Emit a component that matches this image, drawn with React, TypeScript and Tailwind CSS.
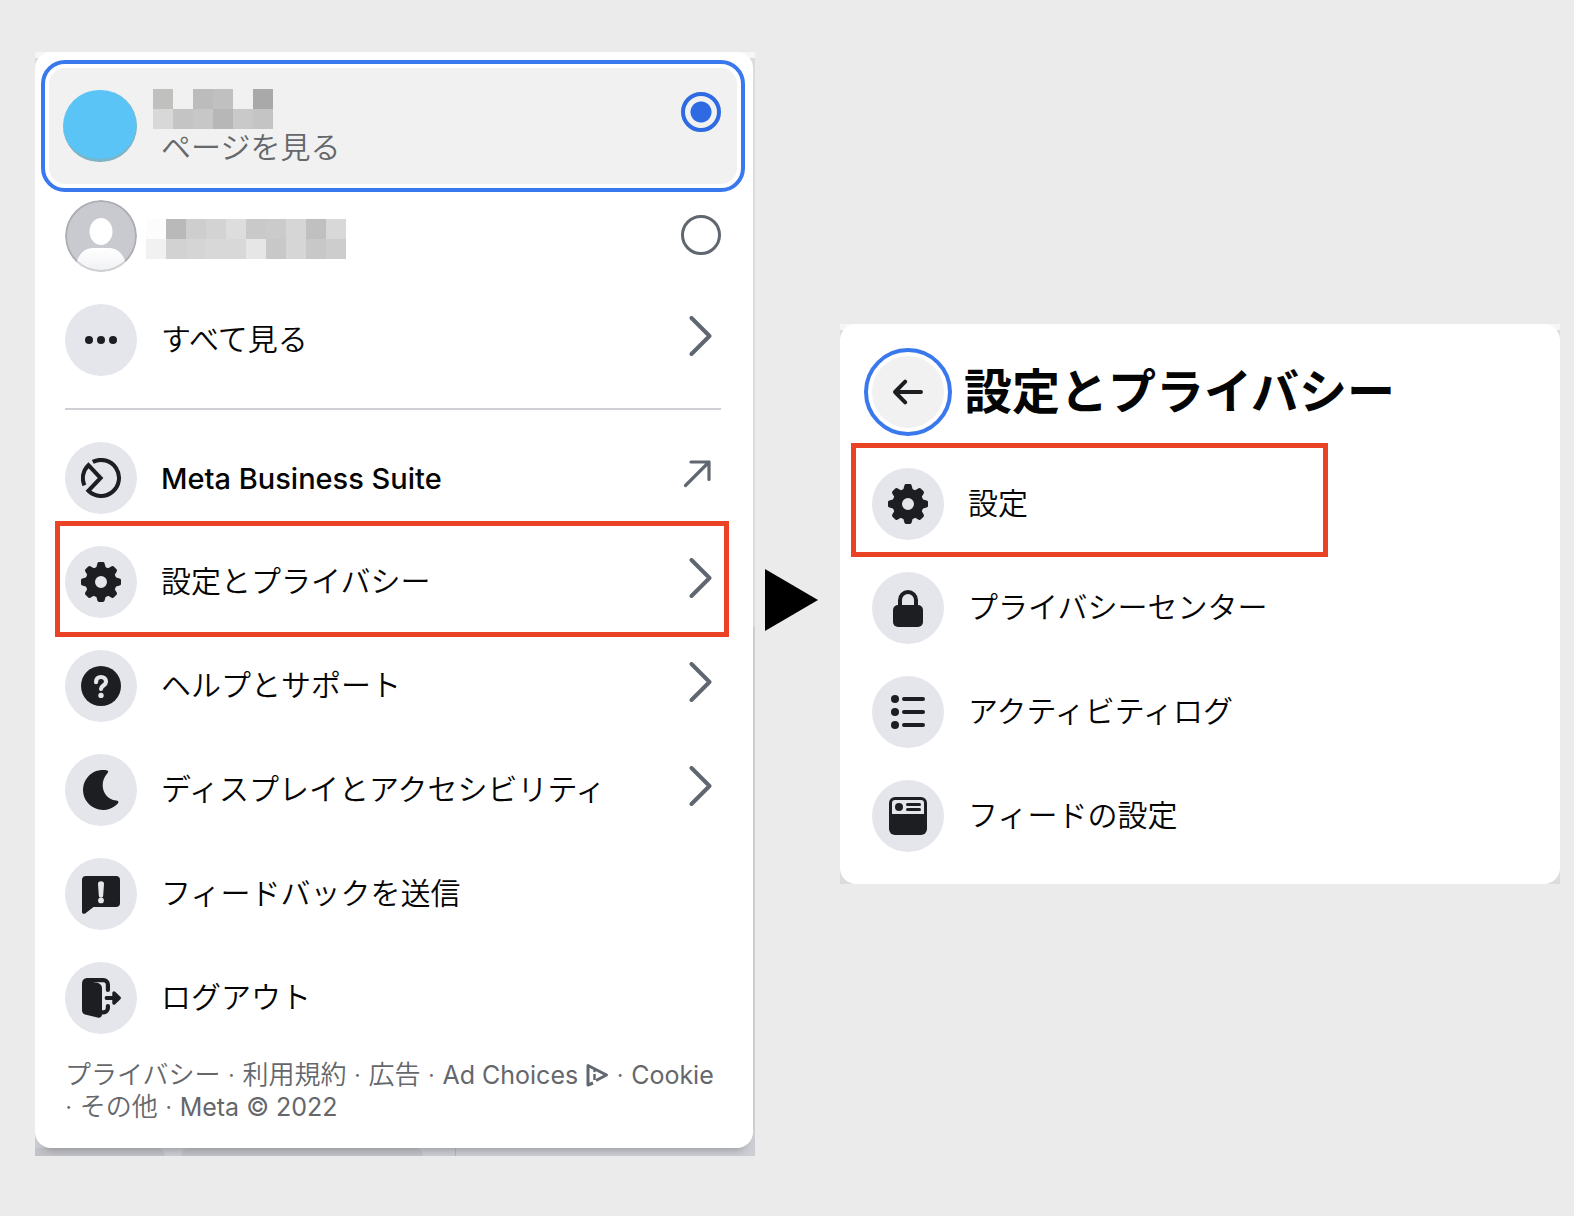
import type { ReactNode } from 'react'

const TOOTH = 'M14.6 8L16.4 1.4Q16.8 0 18 0H22Q23.2 0 23.6 1.4L25.4 8Z'

const ICONS: Record<string, ReactNode> = {
  dots: (
    <g fill="currentColor">
      <circle cx="8" cy="20" r="4" />
      <circle cx="20" cy="20" r="4" />
      <circle cx="32" cy="20" r="4" />
    </g>
  ),
  business: (
    <path
      d="M11.8 3.9A18 18 0 1 1 7.4 32.8L19.6 20 7.4 7.2A18 18 0 0 0 3.4 27.4"
      fill="none" stroke="currentColor" strokeWidth="4"
    />
  ),
  gear: (
    <g fill="currentColor">
      <circle cx="20" cy="20" r="10.8" fill="none" stroke="currentColor" strokeWidth="9.6" />
      {[0, 45, 90, 135, 180, 225, 270, 315].map(a => (
        <path key={a} d={TOOTH} transform={`rotate(${a} 20 20)`} />
      ))}
    </g>
  ),
  help: (
    <g>
      <circle cx="20" cy="20" r="20" fill="currentColor" />
      <path d="M15 16.2C15 12.8 17 11 20 11s5 1.8 5 4.8C25 19.4 20 19.6 20 23" fill="none" stroke="#e4e6eb" strokeWidth="4.2" strokeLinecap="round" />
      <circle cx="20" cy="29.4" r="2.7" fill="#e4e6eb" />
    </g>
  ),
  moon: (
    <path d="M25.4.2C27.4.5 27.7 1.8 26.4 3.2 17.6 12.8 21.4 29 35.2 30.6 37.4 30.8 38 32 36.8 33.4A20 20 0 1 1 25.4.2Z" fill="currentColor" />
  ),
  feedback: (
    <g>
      <path d="M5 2H35a4 4 0 0 1 4 4V29a4 4 0 0 1-4 4H12.5L4.5 39.2C3 40.5 1 39.8 1 38V6a4 4 0 0 1 4-4Z" fill="currentColor" />
      <path d="M17 10C16.9 8 18 7.2 20 7.2S23.1 8 23 10L22.2 21.5C22.1 23 21.4 23.6 20 23.6S17.9 23 17.8 21.5Z" fill="#e4e6eb" />
      <circle cx="20" cy="26.4" r="2.9" fill="#e4e6eb" />
    </g>
  ),
  logout: (
    <g fill="none" stroke="currentColor" strokeLinecap="round">
      <path d="M7 2.1H22.5a4.4 4.4 0 0 1 4.4 4.4V12M21 34.4H22.5a4.4 4.4 0 0 0 4.4-4.4V28" strokeWidth="4.2" />
      <path d="M1 6C1 2 3 0 7 0H13V4.3C18 4.8 21 6.5 21 10V36.5C21 39 19 40.2 16.5 39.5L5 36.8C2.5 36 1 35 1 32.5Z" fill="currentColor" stroke="none" />
      <path d="M25.5 20H36" strokeWidth="3.8" />
      <path d="M33 15L38.2 20 33 25Z" fill="currentColor" strokeWidth="3.4" strokeLinejoin="round" />
    </g>
  ),
  lock: (
    <g>
      <rect x="5" y="17" width="30" height="22" rx="5" fill="currentColor" />
      <path d="M12 19V12a8 8 0 0 1 16 0V19" fill="none" stroke="currentColor" strokeWidth="4" />
    </g>
  ),
  list: (
    <g fill="currentColor">
      {[7, 20, 33].map(y => (
        <g key={y}>
          <circle cx="7" cy={y} r="4" />
          <rect x="14" y={y - 2} width="23" height="4" rx="2" />
        </g>
      ))}
    </g>
  ),
  feed: (
    <g>
      <rect x="1" y="1" width="38" height="38" rx="6" fill="currentColor" />
      <path d="M7 4H33a3 3 0 0 1 3 3V18H4V7a3 3 0 0 1 3-3Z" fill="#e4e6eb" />
      <g fill="currentColor">
        <circle cx="11" cy="11" r="4" />
        <rect x="18" y="7" width="15" height="3" rx="1.5" />
        <rect x="18" y="12" width="15" height="3" rx="1.5" />
      </g>
    </g>
  ),
}

const MENU = [
  { icon: 'business', label: 'Meta Business Suite', end: 'external' },
  { icon: 'gear', label: '設定とプライバシー', end: 'chevron', marked: true },
  { icon: 'help', label: 'ヘルプとサポート', end: 'chevron' },
  { icon: 'moon', label: 'ディスプレイとアクセシビリティ', end: 'chevron' },
  { icon: 'feedback', label: 'フィードバックを送信' },
  { icon: 'logout', label: 'ログアウト' },
]

const SETTINGS = [
  { icon: 'lock', label: 'プライバシーセンター' },
  { icon: 'list', label: 'アクティビティログ' },
  { icon: 'feed', label: 'フィードの設定' },
]

// Pixelated account names
const NAME_ONE = [
  '#c0c0be', '#f1f1f1', '#bcbcbc', '#c0c0c0', '#f1f1f1', '#a9a9a9',
  '#d8d8d8', '#c4c4c4', '#c7c7c7', '#b7b7b7', '#c9c9c9', '#c4c4c4',
]
const NAME_TWO = [
  '#fcfcfc', '#b9b9b9', '#cecece', '#d3d3d3', '#dddddd', '#c9c9c9', '#cbcbcb', '#d6d6d6', '#c0c0c0', '#d8d8d8',
  '#f1f1f1', '#d2d2d2', '#d5d5d5', '#d8d8d8', '#d8d8d8', '#e6e6e6', '#c8c8c8', '#d6d6d6', '#c8c8c8', '#cdcdcd',
]

function Mosaic({ cells, className }: { cells: string[]; className: string }) {
  return (
    <span className={`grid auto-rows-[20px] ${className}`}>
      {cells.map((color, i) => (
        <span key={i} style={{ backgroundColor: color }} />
      ))}
    </span>
  )
}

function IconCircle({ name }: { name: string }) {
  return (
    <span className="flex size-[72px] shrink-0 items-center justify-center rounded-full bg-[#e4e6eb] text-[#1c1e21]">
      <svg viewBox="0 0 40 40" className="size-10">{ICONS[name]}</svg>
    </span>
  )
}

function EndIcon({ type }: { type: string }) {
  return (
    <svg
      viewBox="0 0 40 40" className="mb-2 ml-auto size-10 shrink-0 text-[#606770]"
      fill="none" stroke="currentColor" strokeLinecap="round" strokeLinejoin="round"
    >
      {type === 'chevron'
        ? <path d="M10.5 2L28.5 20 10.5 38" strokeWidth="4" />
        : <path d="M4.5 31.5L28 8M10 8H28V25.5" strokeWidth="3.2" />}
    </svg>
  )
}

type RowProps = { icon: string; label: string; end?: string; marked?: boolean }

function MenuRow({ icon, label, end, marked }: RowProps) {
  return (
    <li className="relative">
      <button type="button" className="flex h-[104px] w-full items-center gap-6 px-4 text-left leading-10 text-[#050505]">
        <IconCircle name={icon} />
        <span className={icon === 'business' ? 'pt-0.5 text-[29px] font-medium' : 'pb-0.5 text-[30px] font-[350]'}>{label}</span>
        {end && <EndIcon type={end} />}
      </button>
      {marked && <span className="pointer-events-none absolute -top-[9px] right-2 -bottom-[3px] left-1.5 border-[5px] border-[#eb4226]" />}
    </li>
  )
}

function AccountMenu() {
  return (
    <section className="min-w-0 flex-1 overflow-hidden bg-[#d0d1d5] bg-[linear-gradient(#f6f6f6_0_6px,#dcdcdc_6px_575px,#cdced4_575px)]">
      <div className="mr-0.5 rounded-2xl bg-white pt-4 pr-4 pb-[25px] pl-3.5 shadow-[0_10px_8px_-8px_rgba(0,0,0,0.25)]">
        <label className="flex h-[116px] items-start rounded-2xl bg-[#f1f1f1] pr-4 pl-3.5 outline-4 outline-offset-4 outline-[#3a78ee]">
          <span className="mt-[22px] h-[72px] w-[74px] shrink-0 rounded-full border-r border-b-3 border-[#7db5c6] bg-[#5ac4f7]" />
          <span className="mt-[21px] ml-4 block">
            <Mosaic cells={NAME_ONE} className="grid-cols-[repeat(6,20px)]" />
            <span className="block pl-2 text-[30px] leading-9 font-[350] text-[#65676b]">ページを見る</span>
          </span>
          <input
            type="radio" name="account" defaultChecked
            className="mt-6 ml-auto size-10 shrink-0 appearance-none rounded-full border-4 border-[#2e6be2] bg-[radial-gradient(circle,#2e6be2_10px,transparent_11px)]"
          />
        </label>
        <label className="flex h-[104px] items-center px-4">
          <svg viewBox="0 0 72 72" className="size-[72px] shrink-0">
            <defs>
              <linearGradient id="body" x1="0" y1="0" x2="0" y2="1">
                <stop offset="0" stopColor="#fff" />
                <stop offset="1" stopColor="#eff0f3" />
              </linearGradient>
              <clipPath id="face"><circle cx="36" cy="36" r="36" /></clipPath>
            </defs>
            <g clipPath="url(#face)">
              <circle cx="36" cy="36" r="36" fill="#c9cad0" />
              <ellipse cx="36" cy="31.5" rx="11.5" ry="13.5" fill="#fff" />
              <path d="M11 64C14 53 20 48 29 48H43C52 48 58 53 61 64V72H11Z" fill="url(#body)" />
              <circle cx="36" cy="36" r="35" fill="none" stroke="#000" strokeOpacity="0.14" strokeWidth="2" />
            </g>
          </svg>
          <Mosaic cells={NAME_TWO} className="ml-[9px] mt-1.5 grid-cols-[repeat(10,20px)]" />
          <input
            type="radio" name="account"
            className="mb-0.5 ml-auto size-10 shrink-0 appearance-none rounded-full border-3 border-[#606770]"
          />
        </label>
        <ul>
          <MenuRow icon="dots" label="すべて見る" end="chevron" />
        </ul>
        <hr className="mx-4 my-4 border-t-2 border-[#ced0d4]" />
        <ul>
          {MENU.map(item => <MenuRow key={item.label} {...item} />)}
        </ul>
        <footer className="mt-[9px] px-4 text-[26px] leading-8 font-[350] text-[#65676b]">
          <a href="#">プライバシー</a> · <a href="#">利用規約</a> · <a href="#">広告</a> ·{' '}
          <a href="#" className="text-[25px] font-normal">
            Ad Choices{' '}
            <svg viewBox="0 0 24 24" className="inline size-6 align-[-3px] text-[#606770]" fill="none" stroke="currentColor">
              <path d="M8 20L3 22V2.5L21.5 12 11 17.5" strokeWidth="3" strokeLinejoin="round" />
              <path d="M9.5 11V17" strokeWidth="2.5" />
              <circle cx="9.5" cy="8" r="1.3" fill="currentColor" stroke="none" />
            </svg>
          </a>{' '}
          · <a href="#" className="text-[25px] font-normal">Cookie</a>{' '}
          <span className="whitespace-nowrap">· <a href="#">その他</a></span> · <span className="text-[25px] font-normal">Meta © 2022</span>
        </footer>
      </div>
      {/* Sliver of the page behind the menu */}
      <div className="flex h-2">
        <div className="w-[130px] rounded-tr-lg bg-black/5" />
        <div className="ml-4 w-[242px] rounded-t-lg bg-black/5" />
        <div className="ml-8 w-px bg-black/10" />
      </div>
    </section>
  )
}

function SettingsMenu() {
  return (
    <section className="min-w-0 flex-1 bg-[linear-gradient(#f6f6f6_0_6px,#dcdcdc_6px)]">
      <div className="rounded-2xl bg-white px-4 pb-4">
        <header className="flex h-32 items-center gap-5 px-4 pt-2">
          <button
            type="button" aria-label="戻る"
            className="flex size-[72px] shrink-0 items-center justify-center rounded-full bg-[#f1f1f1] text-[#1c1e21] outline-4 outline-offset-4 outline-[#3a78ee]"
          >
            <svg viewBox="0 0 40 40" className="size-10" fill="none" stroke="currentColor" strokeWidth="4" strokeLinecap="round" strokeLinejoin="round">
              <path d="M33 20H7M17.2 9.6L7 20 17.2 30.4" />
            </svg>
          </button>
          <h1 className="text-5xl font-bold text-[#050505]">設定とプライバシー</h1>
        </header>
        <ul>
          <li className="relative">
            <button type="button" className="flex h-[104px] w-full items-center gap-6 px-4 text-left leading-10 text-[#050505]">
              <IconCircle name="gear" />
              <span className="pb-0.5 text-[30px] font-[350]">設定</span>
            </button>
            <span className="pointer-events-none absolute -top-[9px] -bottom-px -left-[5px] w-[477px] border-[5px] border-[#eb4226]" />
          </li>
          {SETTINGS.map(item => <MenuRow key={item.label} {...item} />)}
        </ul>
      </div>
    </section>
  )
}

export default function App() {
  return (
    <main className="flex min-h-screen items-center bg-[#ebebeb] pt-[52px] pr-3.5 pb-[60px] pl-[35px] font-['Inter','Noto_Sans_CJK_JP',sans-serif]">
      <AccountMenu />
      <div className="mb-2 flex w-[85px] shrink-0 pl-2.5">
        <svg viewBox="0 0 53 62" className="h-[62px] w-[53px]">
          <path d="M0 0L53 31 0 62Z" fill="#000" />
        </svg>
      </div>
      <SettingsMenu />
    </main>
  )
}
